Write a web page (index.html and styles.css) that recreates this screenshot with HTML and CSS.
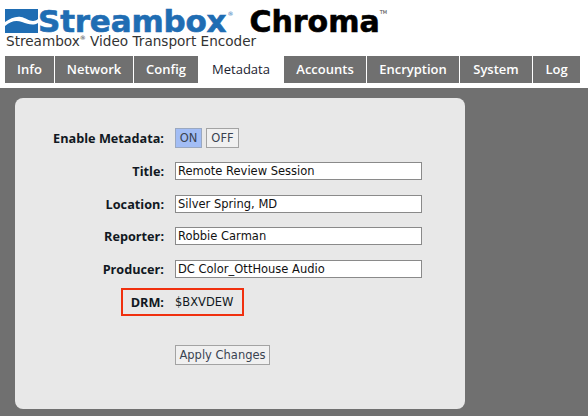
FILE: index.html
```html
<!DOCTYPE html>
<html lang="en">
<head>
  <meta charset="UTF-8" />
  <title>Streambox Chroma</title>
  <link rel="stylesheet" href="styles.css">
</head>
<body>
  <div class="header">
    <div class="logo">
      <svg class="logo-mark" viewBox="0 0 33 24" xmlns="http://www.w3.org/2000/svg">
        <path fill="#1f6db3" d="M0 0H33V10C27 15 22 9 16 8C10 7 5 10 0 13Z"></path>
        <path fill="#1f6db3" d="M0 17C6 12 11 11 17 13C23 15 28 17 33 14V24H0Z"></path>
      </svg>
      <span class="brand">Streambox</span><span class="reg">®</span>
      <span class="product">Chroma</span><span class="tm">TM</span>
    </div>
    <div class="tagline">Streambox<sup>®</sup> Video Transport Encoder</div>
  </div>

  <div class="tabs">
    <a class="tab tab-info">Info</a>
    <a class="tab tab-network">Network</a>
    <a class="tab tab-config">Config</a>
    <a class="tab tab-metadata active">Metadata</a>
    <a class="tab tab-accounts">Accounts</a>
    <a class="tab tab-encryption">Encryption</a>
    <a class="tab tab-system">System</a>
    <a class="tab tab-log">Log</a>
  </div>

  <div class="main">
    <form class="panel">
      <div class="row">
        <label>Enable Metadata:</label>
        <div class="toggle">
          <button type="button" class="toggle-btn on">ON</button>
          <button type="button" class="toggle-btn">OFF</button>
        </div>
      </div>
      <div class="row">
        <label>Title:</label>
        <input type="text" value="Remote Review Session">
      </div>
      <div class="row">
        <label>Location:</label>
        <input type="text" value="Silver Spring, MD">
      </div>
      <div class="row">
        <label>Reporter:</label>
        <input type="text" value="Robbie Carman">
      </div>
      <div class="row">
        <label>Producer:</label>
        <input type="text" value="DC Color_OttHouse Audio">
      </div>
      <div class="row drm-row">
        <label>DRM:</label>
        <span class="value">$BXVDEW</span>
        <div class="drm-box"></div>
      </div>
      <div class="actions">
        <button type="button" class="apply">Apply Changes</button>
      </div>
    </form>
  </div>
</body>
</html>
```

FILE: styles.css
```css
:root {
  --gray: #707070;
  --panel: #e8e8e8;
  --blue: #1f6db3;
  --text: #1a2230;
}

html, body {
  height: 100%;
}

body {
  margin: 0;
  width: 588px;
  height: 416px;
  overflow: hidden;
  display: flex;
  flex-direction: column;
  background: #ffffff;
  font-family: "DejaVu Sans", sans-serif;
  color: var(--text);
}

.header {
  height: 56px;
  padding-left: 5px;
  box-sizing: border-box;
}

.logo {
  display: flex;
  align-items: flex-start;
  height: 34px;
  padding-top: 9px;
  box-sizing: border-box;
  white-space: nowrap;
}

.logo-mark {
  width: 33px;
  height: 24px;
  flex: none;
}

.brand {
  font-weight: 700;
  font-size: 31px;
  line-height: 25px;
  color: var(--blue);
  letter-spacing: -0.2px;
  -webkit-text-stroke: 0.6px var(--blue);
}

.reg {
  font-size: 6px;
  line-height: 10px;
  color: var(--blue);
  margin-left: 1px;
}

.product {
  font-weight: 700;
  font-size: 30px;
  line-height: 25px;
  color: #000000;
  margin-left: 16px;
  -webkit-text-stroke: 0.6px #000000;
}

.tm {
  font-size: 5px;
  line-height: 6px;
  color: #333333;
}

.tagline {
  font-size: 13.6px;
  line-height: 13px;
  color: #333333;
  white-space: nowrap;
  margin-top: 1px;
  margin-left: 1px;
}

.tagline sup {
  font-size: 6px;
  line-height: 0;
}

.tabs {
  display: flex;
  gap: 1px;
  height: 27px;
  padding-left: 5px;
  margin-bottom: 5px;
}

.tab {
  box-sizing: border-box;
  display: flex;
  align-items: center;
  justify-content: center;
  padding-bottom: 1px;
  background: var(--gray);
  color: #ffffff;
  font-family: "Open Sans", "DejaVu Sans", sans-serif;
  font-size: 13px;
  font-weight: 600;
}

.tab.active {
  background: #ffffff;
  color: var(--text);
  font-weight: 400;
}

.tab-info { width: 49px; }
.tab-network { width: 78px; }
.tab-config { width: 64px; }
.tab-metadata { width: 84px; }
.tab-accounts { width: 82px; }
.tab-encryption { width: 92px; }
.tab-system { width: 72px; }
.tab-log { width: 47px; }

.main {
  flex: 1;
  background: var(--gray);
  padding: 10px 0 7px 15px;
  display: flex;
}

.panel {
  width: 450px;
  box-sizing: border-box;
  background: var(--panel);
  border-radius: 8px;
  padding-top: 30px;
}

.row {
  display: flex;
  align-items: center;
  gap: 11px;
  height: 20px;
  margin-bottom: 12.8px;
  position: relative;
}

.row label {
  width: 149px;
  text-align: right;
  font-family: "Open Sans", "DejaVu Sans", sans-serif;
  font-size: 12.7px;
  font-weight: 700;
  color: #111822;
  white-space: nowrap;
}

.row input {
  width: 247px;
  height: 18px;
  box-sizing: border-box;
  padding: 0 2px;
  border: 1px solid #8a8a8a;
  background: #ffffff;
  font-family: "DejaVu Sans", sans-serif;
  font-size: 11.5px;
  color: #111111;
}

.toggle {
  display: flex;
  gap: 4px;
}

.toggle-btn, .apply {
  box-sizing: border-box;
  border: 1px solid #a3a3a3;
  background: #f0f0f0;
  font-family: "DejaVu Sans", sans-serif;
  font-size: 11.5px;
  color: #3a4350;
  padding: 0;
  height: 20px;
}

.toggle-btn {
  width: 27px;
}

.toggle-btn + .toggle-btn {
  width: 33px;
}

.toggle-btn.on {
  background: #a2bdf5;
  border-color: #9aa8c0;
}

.value {
  font-size: 11.5px;
  color: #111822;
}

.drm-box {
  position: absolute;
  left: 106px;
  top: -4px;
  width: 123px;
  height: 28px;
  box-sizing: border-box;
  border: 2px solid #f0300f;
  pointer-events: none;
}

.actions {
  padding: 19px 0 0 160px;
}

.apply {
  width: 95px;
  height: 20px;
}
```
